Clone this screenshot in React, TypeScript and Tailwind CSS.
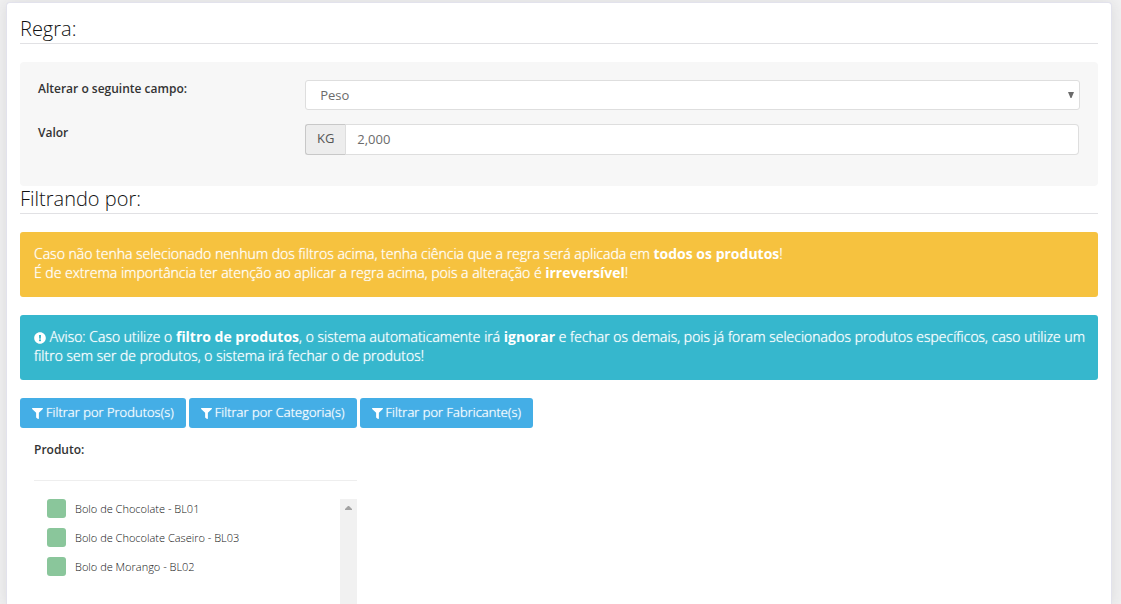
import React, { useState } from "react";
import { FaExclamationCircle, FaFilter } from "react-icons/fa";

const products = [
  "Bolo de Chocolate - BL01",
  "Bolo de Chocolate Caseiro - BL03",
  "Bolo de Morango - BL02",
];

const filters = [
  "Filtrar por Produtos(s)",
  "Filtrar por Categoria(s)",
  "Filtrar por Fabricante(s)",
];

function SectionTitle({ children }: { children: React.ReactNode }) {
  return (
    <h2 className="border-b border-[#e1e1e4] pb-px text-[20px] leading-[26px] font-light text-[#111111]">
      {children}
    </h2>
  );
}

function Notice({ tone, children }: { tone: string; children: React.ReactNode }) {
  return (
    <div
      role="alert"
      className={`mb-[18px] rounded-[3px] pt-3 pr-2 pb-[15px] pl-3.5 text-sm leading-[19px] font-light text-white [text-shadow:0_0_1px_#ffffff] ${tone}`}
    >
      {children}
    </div>
  );
}

function Strong({ children }: { children: React.ReactNode }) {
  return <strong className="font-bold [text-shadow:none]">{children}</strong>;
}

export default function App() {
  const [value, setValue] = useState("2,000");

  return (
    <div className="flex min-h-screen flex-col bg-[#f1f1f2] pt-[2px] pr-[9px] pl-[6px] font-['Open_Sans',sans-serif]">
      <main className="flex flex-1 flex-col rounded-t-[4px] border border-b-0 border-[#e2e2ec] bg-white px-[13px] pt-[13px] shadow-[0_1px_15px_1px_rgba(39,39,39,0.1)]">
        <SectionTitle>Regra:</SectionTitle>

        <section className="mt-[18px] rounded-[4px] bg-[#f7f7f7] px-[18px] pt-[18px] pb-[31px]">
          <div className="mb-3.5 grid grid-cols-[1fr_3fr] gap-x-[9px]">
            <label htmlFor="campo" className="text-xs leading-[18px] font-semibold text-[#333333]">
              Alterar o seguinte campo:
            </label>
            <div className="relative">
              <select
                id="campo"
                defaultValue="peso"
                className="block h-[30px] w-full appearance-none rounded-[3px] border border-[#dedede] bg-white px-3.5 pt-px text-[13px] text-[#6b6b6b]"
              >
                <option value="peso">Peso</option>
              </select>
              <svg
                aria-hidden="true"
                viewBox="0 0 6 6"
                className="pointer-events-none absolute top-3 right-[6px] h-[6px] w-[6px] fill-[#6b6b6b]"
              >
                <path d="M0 0h6L3.5 6h-1z" />
              </svg>
            </div>
          </div>
          <div className="grid grid-cols-[1fr_3fr] gap-x-[9px]">
            <label htmlFor="valor" className="text-xs leading-[18px] font-semibold text-[#333333]">
              Valor
            </label>
            <div className="flex h-[31px] pr-px">
              <span className="flex w-[41px] items-center justify-center rounded-l-[3px] border border-[#c8c8c8] border-r-[#dedede] bg-[#ededed] pb-px text-[13px] text-[#555555]">
                KG
              </span>
              <input
                id="valor"
                type="text"
                value={value}
                onChange={(e) => setValue(e.target.value)}
                className="min-w-0 flex-1 rounded-r-[4px] border border-l-0 border-[#dedede] bg-white px-[11px] text-[13px] text-[#6b6b6b]"
              />
            </div>
          </div>
        </section>

        <SectionTitle>Filtrando por:</SectionTitle>

        <div className="mt-[18px]">
          <Notice tone="bg-[#f6c23f]">
            Caso não tenha selecionado nenhum dos filtros acima, tenha ciência que a regra será
            aplicada em <Strong>todos os produtos</Strong>!
            <br />É de extrema importância ter atenção ao aplicar a regra acima, pois a alteração é{" "}
            <Strong>irreversível</Strong>!
          </Notice>
          <Notice tone="bg-[#36b7cd]">
            <FaExclamationCircle className="inline h-3 w-3" aria-hidden="true" /> Aviso: Caso
            utilize o <Strong>filtro de produtos</Strong>, o sistema automaticamente irá{" "}
            <Strong>ignorar</Strong> e fechar os demais, pois já foram selecionados produtos
            específicos, caso utilize um filtro sem ser de produtos, o sistema irá fechar o de
            produtos!
          </Notice>
        </div>

        <div className="flex gap-[3px]">
          {filters.map((label) => (
            <button
              key={label}
              type="button"
              className="flex h-[30px] items-center gap-[3px] rounded-[3px] bg-[#44aee6] px-3 text-[13px] font-light text-white [text-shadow:0_0_1px_#ffffff]"
            >
              <FaFilter className="h-[11px] w-[11px]" aria-hidden="true" />
              {label}
            </button>
          ))}
        </div>

        <div role="group" aria-labelledby="produto" className="flex flex-1 flex-col pt-[13px] pl-3.5">
          <h3 id="produto" className="text-xs leading-[18px] font-semibold text-[#333333]">
            Produto:
          </h3>
          <div className="mt-[21px] flex w-[323px] flex-1 flex-col border-t border-[#eeeeee] pt-[18px]">
            <div className="flex flex-1 justify-between">
              <ul className="pl-[13px]">
                {products.map((name) => (
                  <li key={name} className="h-[29px]">
                    <label className="flex items-center gap-[9px] text-[11px] leading-[18px] font-light text-[#111111]">
                      <input
                        type="checkbox"
                        className="h-[19px] w-[19px] appearance-none rounded-[3px] bg-[#8ac69b] checked:bg-[#4f9d66]"
                      />
                      {name}
                    </label>
                  </li>
                ))}
              </ul>
              <div className="flex w-[17px] justify-center bg-[#f1f1f1] pt-[7px]">
                <svg aria-hidden="true" viewBox="0 0 7 4" className="h-1 w-[7px] fill-[#a3a3a3]">
                  <path d="M0 4V3L3 0h1l3 3v1z" />
                </svg>
              </div>
            </div>
          </div>
        </div>
      </main>
    </div>
  );
}
